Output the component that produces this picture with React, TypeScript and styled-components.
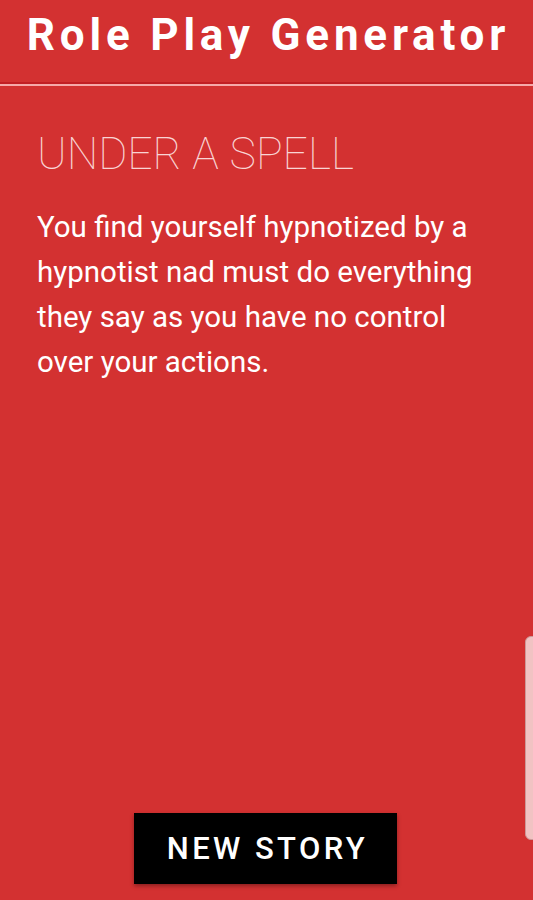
import styled, { createGlobalStyle } from 'styled-components'

const GlobalStyle = createGlobalStyle`
  html, body {
    margin: 0;
    padding: 0;
    background: #d33131;
  }
  body {
    font-family: Roboto, "Liberation Sans", sans-serif;
  }
`

const story = {
  title: 'UNDER A SPELL',
  text: 'You find yourself hypnotized by a hypnotist nad must do everything they say as you have no control over your actions.',
}

export default function App() {
  return (
    <>
      <GlobalStyle />
      <Screen>
        {/* HEADER */}
        <Header>
          <Title>Role Play Generator</Title>
        </Header>

        {/* STORY */}
        <Story>
          <StoryTitle>{story.title}</StoryTitle>
          <StoryText>{story.text}</StoryText>
        </Story>

        {/* BUTTON */}
        <Footer>
          <NewStoryBtn>NEW STORY</NewStoryBtn>
        </Footer>

        <ScrollThumb />
      </Screen>
    </>
  )
}

// SCREEN
const Screen = styled.div`
  position: relative;
  width: 533px;
  height: 900px;
  display: flex;
  flex-direction: column;
  background: #d33131;
  overflow: hidden;
`

// HEADER
const Header = styled.header`
  height: 82px;
  display: flex;
  align-items: center;
  justify-content: center;
  border-bottom: 2px solid #c21f24;
  box-shadow: 0 2px 0 #f6a9a9;
  margin-bottom: 2px;
`

const Title = styled.h1`
  margin: 0 0 12px 4px;
  color: #fff;
  font-size: 44px;
  font-weight: 700;
  letter-spacing: 4.8px;
  line-height: 1;
  white-space: nowrap;
`

// STORY
const Story = styled.section`
  flex: 1;
  padding: 46px 30px 0 37px;
`

const StoryTitle = styled.h2`
  margin: 0;
  color: #f9d4d4;
  font-size: 44.5px;
  font-weight: 100;
  line-height: 1;
`

const StoryText = styled.p`
  margin: 28px 0 0;
  color: #fff;
  font-size: 29.5px;
  line-height: 45px;
  font-weight: 400;
`

// FOOTER
const Footer = styled.div`
  display: flex;
  justify-content: center;
  padding: 0 2px 16px 0;
`

const NewStoryBtn = styled.button`
  width: 263px;
  height: 71px;
  padding: 0 0 0 4px;
  border: none;
  background: #000;
  color: #fff;
  font-family: Roboto, "Liberation Sans", sans-serif;
  font-size: 31px;
  font-weight: 500;
  letter-spacing: 3.4px;
  box-shadow: 0 2px 4px rgba(0, 0, 0, 0.35);
`

// SCROLL THUMB
const ScrollThumb = styled.div`
  position: absolute;
  right: -6px;
  top: 636px;
  width: 12px;
  height: 202px;
  border-radius: 6px;
  background: #f1c3c3;
  border: 1px solid #c99;
`
